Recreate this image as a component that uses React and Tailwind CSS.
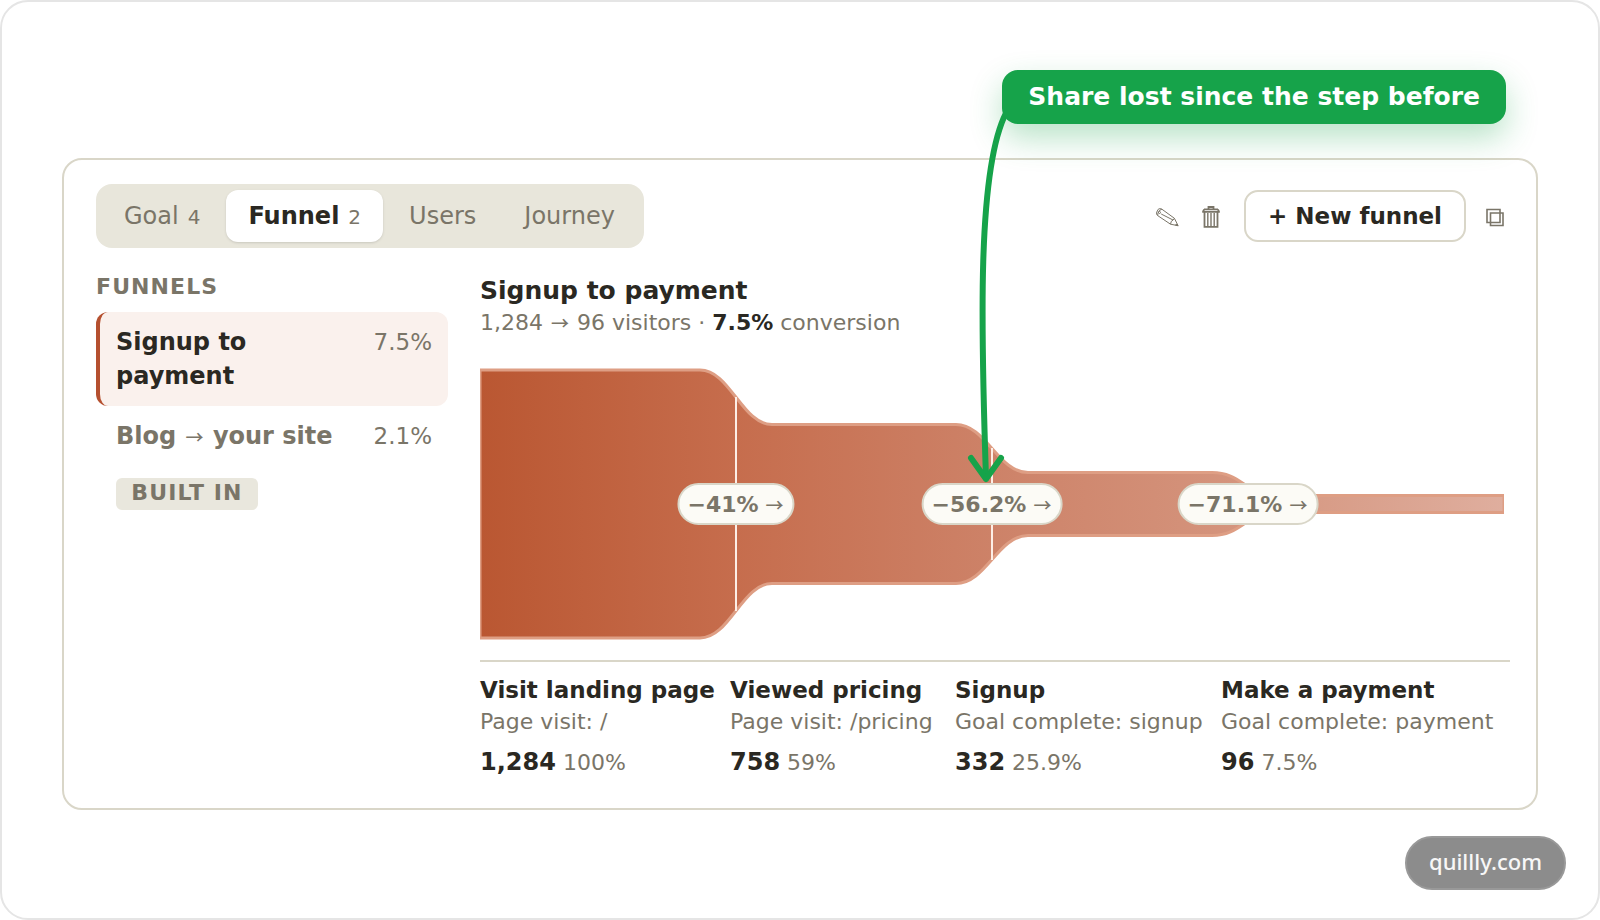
import React from 'react';
import clsx from 'clsx';

const tabs = [
  { id: 'goal', label: 'Goal', count: 4 },
  { id: 'funnel', label: 'Funnel', count: 2, active: true },
  { id: 'users', label: 'Users' },
  { id: 'journey', label: 'Journey' },
];

const steps = [
  { name: 'Visit landing page', rule: 'Page visit: /', visitors: '1,284', share: '100%' },
  { name: 'Viewed pricing', rule: 'Page visit: /pricing', visitors: '758', share: '59%' },
  { name: 'Signup', rule: 'Goal complete: signup', visitors: '332', share: '25.9%' },
  { name: 'Make a payment', rule: 'Goal complete: payment', visitors: '96', share: '7.5%' },
];

const Arrow = () => (
  <span className="mx-px font-['Noto_Sans_CJK_SC',sans-serif] text-[18px] font-medium leading-none">→</span>
);

const PencilIcon = () => (
  <svg className="h-6 w-6" viewBox="0 0 24 24" fill="none" stroke="currentColor" strokeWidth="1" strokeLinejoin="round">
    <path d="M2.200 5.300.8 8c-.6 1.200-.2 2.800.9 3.600l12.800 8.600 7.600 1.500-3.700-7.400L5.900 5.200c-1.200-.7-2.700-.7-3.700.1Z" />
    <path d="M1.700 11.600c-.4-2.600 1.700-6 4.200-6.400M5.200 10l11.800 6M14.500 20.200l.8-2.900 1.900-1.300 1.200-1.700" />
    <circle cx="3.500" cy="8.500" r="1" />
    <path d="m20.200 20.200 1.900 1.500-2.500-.5z" fill="currentColor" />
  </svg>
);

const TrashIcon = () => (
  <svg className="h-6 w-6" viewBox="0 0 24 24" fill="none" stroke="currentColor" strokeWidth="1.800">
    <path d="M8.500 4.500V3h5v1.500M4 5.300h14M2.200 7.800h17.600M2.800 8 4.200 5.300M19.200 8l-1.400-2.700" />
    <path d="M4.500 8v14.800h13V8" />
    <path d="M7.800 9v13.500M11 9v13.500M14.200 9v13.500" strokeWidth="1.400" />
  </svg>
);

const CopyIcon = () => (
  <svg className="h-6 w-6" viewBox="0 0 24 24" fill="none" stroke="currentColor" strokeWidth="1.600">
    <path d="M1 5.500h13v13H1zM4.500 9H17v12.500H4.500z" />
  </svg>
);

const TabBar = () => (
  <div role="tablist" className="flex w-[548px] gap-1 rounded-2xl bg-[#e8e6db] p-1.5">
    {tabs.map((tab) => (
      <button
        key={tab.id}
        role="tab"
        aria-selected={!!tab.active}
        className={clsx(
          'h-[52px] rounded-xl px-[22px] text-[24px] leading-[34px]',
          tab.active ? 'bg-white font-bold text-[#2a2822] shadow-sm' : 'text-[#7a7568]'
        )}
      >
        {tab.label}
        {tab.count && <span className="ml-[9px] text-[20px] font-normal text-[#7a7568]">{tab.count}</span>}
      </button>
    ))}
  </div>
);

const FunnelList = () => (
  <nav className="pt-[23px] text-[24px] leading-[34px] text-[#7a7568]">
    <h2 className="mb-[9px] text-[22px] font-bold leading-8 tracking-wider">FUNNELS</h2>
    <button className="flex w-full items-start justify-between rounded-xl border-l-4 border-[#b5502f] bg-[#faf1ed] px-4 py-[13px] text-left">
      <span className="w-44 font-bold text-[#2a2822]">Signup to payment</span>
      <span className="text-[23px]">7.5%</span>
    </button>
    <button className="flex w-full items-start justify-between rounded-xl border-l-4 border-transparent px-4 py-[13px] text-left">
      <span className="flex flex-col items-start gap-[25px]">
        <span className="font-bold">
          Blog <Arrow /> your site
        </span>
        <span className="w-[142px] rounded-md bg-[#e9e7dd] pb-0.5 text-center text-[22px] font-bold leading-[30px] tracking-wider">
          BUILT IN
        </span>
      </span>
      <span className="text-[23px]">2.1%</span>
    </button>
  </nav>
);

const DropPill = ({ value, className }) => (
  <span
    className={clsx(
      'absolute top-1/2 flex h-[42px] -translate-x-1/2 -translate-y-1/2 items-center gap-1.5 whitespace-nowrap rounded-full border-2 border-[#d9d6c8] bg-[#fcfbf6] px-2 text-[22px] font-bold text-[#7a7568]',
      className
    )}
  >
    {value} <Arrow />
  </span>
);

const FunnelChart = () => (
  <div className="relative mr-1.5 mt-[30px]">
    <svg className="block h-auto w-full" viewBox="0 0 1024 272" role="img" aria-label="Visitors left at each step">
      <defs>
        <linearGradient id="flow" x1="0" y1="0" x2="1" y2="0">
          <stop offset="0" stopColor="#ba5732" />
          <stop offset="0.25" stopColor="#c66d4d" />
          <stop offset="0.5" stopColor="#cd8268" />
          <stop offset="0.75" stopColor="#d5957e" />
          <stop offset="1" stopColor="#dfae9e" />
        </linearGradient>
      </defs>
      <path
        d="M0 2H220C250 2 262 56.500 292 56.500H476C506 56.500 518 104.500 548 104.500H732C762 104.500 766 127.500 796 127.500H1024V144.500H796C766 144.500 762 167.500 732 167.500H548C518 167.500 506 215.500 476 215.500H292C262 215.500 250 270 220 270H0Z"
        fill="url(#flow)"
        stroke="#de9e84"
        strokeWidth="3"
      />
      <path d="M256 29V243M512 80V192M768 116V156" stroke="#fdeee6" strokeWidth="2" />
    </svg>
    <DropPill value="−41%" className="left-1/4" />
    <DropPill value="−56.2%" className="left-1/2" />
    <DropPill value="−71.1%" className="left-3/4" />
    {/* pointer from the callout down to the second drop */}
    <svg
      className="absolute bottom-1/2 left-1/2 h-[400px] w-[60px] -translate-x-1/2"
      viewBox="0 0 60 400"
      fill="none"
      stroke="#16a34a"
      strokeWidth="6"
      strokeLinecap="round"
      strokeLinejoin="round"
      aria-hidden="true"
    >
      <path d="M44 9C15 66 19 226 24 374" />
      <path d="M9 354 24 375 39 354" />
    </svg>
  </div>
);

const StepStats = () => (
  <dl className="mt-5 grid grid-cols-[230fr_205fr_246fr_289fr] gap-5 whitespace-nowrap border-t-2 border-[#d9d6c8] pt-[13px] text-[22px] leading-[34px] text-[#7a7568]">
    {steps.map((step) => (
      <div key={step.name} className="min-w-0">
        <dt className="text-[23px] font-bold leading-[30px] text-[#2a2822]">{step.name}</dt>
        <dd>{step.rule}</dd>
        <dd className="mt-1.5">
          <strong className="text-[24px] text-[#2a2822]">{step.visitors}</strong> {step.share}
        </dd>
      </div>
    ))}
  </dl>
);

export default function App() {
  return (
    <div className="flex min-h-screen flex-col rounded-[28px] border-2 border-[#e5e5e5] bg-white px-[60px] pb-7 pt-[68px] font-['DejaVu_Sans',sans-serif]">
      <div className="z-10 mr-8 self-end rounded-2xl bg-[#16a34a] px-[26px] py-2.5 text-[25px] font-bold leading-[34px] text-white shadow-[0_14px_32px_rgba(22,163,74,0.3)]">
        Share lost since the step before
      </div>

      <main className="mt-[34px] rounded-[20px] border-2 border-[#d9d6c8] pb-7 pl-8 pr-[26px] pt-6">
        <div className="flex items-center justify-between">
          <TabBar />
          <div className="flex items-center gap-5 text-[#7a7568]">
            <button aria-label="Edit funnel"><PencilIcon /></button>
            <button aria-label="Delete funnel"><TrashIcon /></button>
            <button className="h-[52px] rounded-[14px] border-2 border-[#d9d6c8] px-[22px] text-[23px] font-bold text-[#2a2822]">
              + New funnel
            </button>
            <button aria-label="Copy"><CopyIcon /></button>
          </div>
        </div>

        <div className="grid grid-cols-[352px_1fr] gap-8">
          <FunnelList />
          <section className="min-w-0 pt-[26px]">
            <h1 className="text-[25px] font-bold leading-[34px] text-[#2a2822]">Signup to payment</h1>
            <p className="text-[22px] leading-[30px] text-[#7a7568]">
              1,284 <Arrow /> 96 visitors · <strong className="text-[#2a2822]">7.5%</strong> conversion
            </p>
            <FunnelChart />
            <StepStats />
          </section>
        </div>
      </main>

      <a
        href="https://quillly.com"
        className="-mr-7 mt-[26px] flex h-[54px] items-center self-end rounded-full border-2 border-[#999999] bg-[#8c8c8c] px-[22px] pb-1 font-['Noto_Sans',sans-serif] text-[22px] font-medium text-[#f7f7f7]"
      >
        quillly.com
      </a>
    </div>
  );
}
